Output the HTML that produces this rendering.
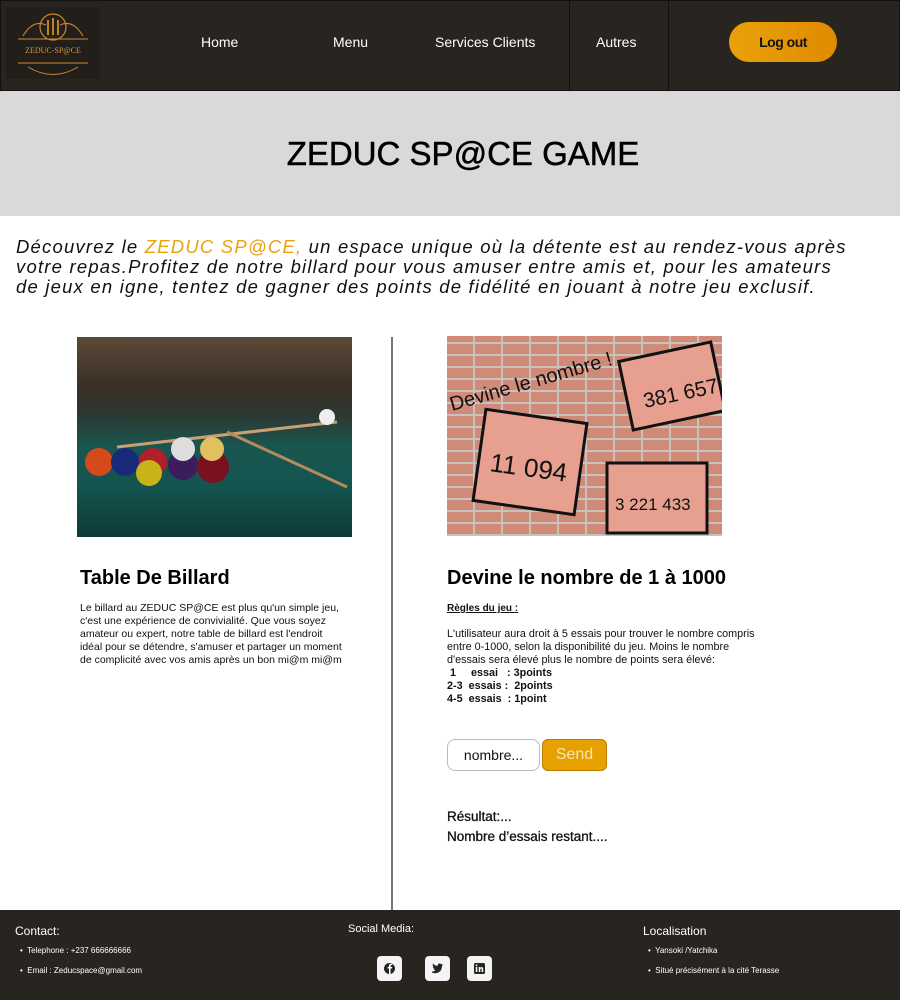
<!DOCTYPE html>
<html><head><meta charset="utf-8"><style>
*{margin:0;padding:0;box-sizing:border-box}
body{width:900px;height:1000px;position:relative;font-family:"Liberation Sans",sans-serif;background:#fff;overflow:hidden}
.abs{position:absolute}
nav{position:absolute;left:0;top:0;width:900px;height:91px;background:#28241f;border:1px solid #111}
nav a{position:absolute;top:33px;color:#fff;font-size:14px;text-decoration:none}
.hero{position:absolute;top:91px;left:0;width:900px;height:125px;background:#d9d9d9;text-align:center;padding-left:26px}
.hero h1{font-weight:normal;font-size:33px;line-height:125px;color:#000;-webkit-text-stroke:0.5px #000}
.intro{position:absolute;left:16px;top:237px;width:880px;font-style:italic;font-size:18.5px;line-height:20px;letter-spacing:1.2px;color:#111;white-space:nowrap}
h2{position:absolute;font-size:20px;font-weight:bold;color:#000}
.small{position:absolute;font-size:10.5px;line-height:13px;color:#111}
footer{position:absolute;left:0;top:910px;width:900px;height:90px;background:#28241f;color:#fff}
footer .t{position:absolute;font-size:12px}
footer .li{position:absolute;font-size:8px}
.ic{position:absolute;top:956px;width:25px;height:25px;background:#f4f4f4;border-radius:4px}
</style></head><body>
<nav>
<div class="abs" style="left:5px;top:6px;width:94px;height:72px;background:#221f1b"></div>
<svg class="abs" style="left:7px;top:6px" width="90" height="72" viewBox="0 0 90 72">
<circle cx="45" cy="20" r="13" fill="none" stroke="#c98a2e" stroke-width="1.2"/>
<path d="M10 32 H80 M15 29 Q25 12 38 18 M75 29 Q65 12 52 18 M20 60 Q45 75 70 60 M10 56 H80" stroke="#c98a2e" fill="none" stroke-width="1"/>
<path d="M40 13 V28 M45 11 V28 M50 13 V28" stroke="#e89a28" stroke-width="1.6"/>
<text x="45" y="46" fill="#d69a3e" font-size="8" text-anchor="middle" font-family="Liberation Serif">ZEDUC-SP@CE</text>
</svg>
<a style="left:200px">Home</a>
<a style="left:332px">Menu</a>
<a style="left:434px">Services Clients</a>
<div class="abs" style="left:568px;top:0;width:1px;height:90px;background:#111"></div>
<div class="abs" style="left:667px;top:0;width:1px;height:90px;background:#111"></div>
<a style="left:595px">Autres</a>
<div class="abs" style="left:728px;top:21px;width:108px;height:40px;border-radius:20px;background:linear-gradient(90deg,#e9a20a,#e08a00);color:#111;font-weight:bold;font-size:14px;text-align:center;line-height:40px;letter-spacing:-0.5px">Log out</div>
</nav>
<div class="hero"><h1>ZEDUC SP@CE GAME</h1></div>
<div class="intro">Découvrez le <span style="color:#e9a20a">ZEDUC SP@CE,</span> un espace unique où la détente est au rendez-vous après<br>votre repas.Profitez de notre billard pour vous amuser entre amis et, pour les amateurs<br>de jeux en igne, tentez de gagner des points de fidélité en jouant à notre jeu exclusif.</div>

<div class="abs" style="left:77px;top:337px;width:275px;height:200px;background:linear-gradient(180deg,#5a4a38 0%,#3a2f25 25%,#2a3a33 40%,#1a5650 55%,#14544f 75%,#0e3a37 100%)"></div>
<svg class="abs" style="left:77px;top:337px" width="275" height="200">
<line x1="40" y1="110" x2="260" y2="85" stroke="#c9a070" stroke-width="3"/>
<line x1="150" y1="95" x2="270" y2="150" stroke="#b98a5a" stroke-width="3"/>
<circle cx="250" cy="80" r="8" fill="#eee"/>
<circle cx="22" cy="125" r="14" fill="#d44a1a"/><circle cx="48" cy="125" r="14" fill="#1a2a7a"/>
<circle cx="76" cy="125" r="14" fill="#b01f2a"/><circle cx="106" cy="128" r="15" fill="#3a1d5a"/>
<circle cx="136" cy="130" r="16" fill="#7a1020"/><circle cx="72" cy="136" r="13" fill="#c9b21a"/>
<circle cx="106" cy="112" r="12" fill="#ddd"/><circle cx="135" cy="112" r="12" fill="#e0c060"/>
</svg>
<div class="abs" style="left:391px;top:337px;width:2px;height:573px;background:#777"></div>

<div class="abs" style="left:447px;top:336px;width:275px;height:200px;background-color:#dca090;background-image:repeating-linear-gradient(0deg,#c9c2bd 0 2px,transparent 2px 12px),repeating-linear-gradient(90deg,#cf8a78 0 26px,#c9c2bd 26px 28px)"></div>
<svg class="abs" style="left:447px;top:336px" width="275" height="200">
<rect x="178" y="15" width="94" height="70" fill="#e7a090" stroke="#111" stroke-width="3" transform="rotate(-12 225 50)"/>
<rect x="32" y="80" width="102" height="92" fill="#e7a090" stroke="#111" stroke-width="3" transform="rotate(8 83 126)"/>
<rect x="160" y="127" width="100" height="70" fill="#e7a090" stroke="#111" stroke-width="3"/>
<text x="5" y="75" font-size="20" fill="#111" font-family="Liberation Sans" transform="rotate(-16 5 75)">Devine le nombre !</text>
<text x="198" y="72" font-size="21" fill="#111" transform="rotate(-12 198 72)">381 657</text>
<text x="42" y="135" font-size="26" fill="#111" transform="rotate(8 42 135)">11 094</text>
<text x="168" y="174" font-size="17" fill="#111">3 221 433</text>
</svg>

<h2 style="left:80px;top:567px">Table De Billard</h2>
<div class="small" style="left:80px;top:602px;width:265px">Le billard au ZEDUC SP@CE est plus qu'un simple jeu, c'est une expérience de convivialité. Que vous soyez amateur ou expert, notre table de billard est l'endroit idéal pour se détendre, s'amuser et partager un moment de complicité avec vos amis après un bon mi@m mi@m</div>

<h2 style="left:447px;top:567px">Devine le nombre de 1 à 1000</h2>
<div class="small" style="left:447px;top:602px;font-weight:bold;font-size:10px;text-decoration:underline">Règles du jeu :</div>
<div class="small" style="left:447px;top:628px;width:380px;font-size:10.8px">L'utilisateur aura droit à 5 essais pour trouver le nombre compris<br>entre 0-1000, selon la disponibilité du jeu. Moins le nombre<br>d'essais sera élevé plus le nombre de points sera élevé:<br><b>&nbsp;1&nbsp;&nbsp;&nbsp;&nbsp; essai&nbsp;&nbsp; : 3points<br>2-3&nbsp; essais :&nbsp; 2points<br>4-5&nbsp; essais&nbsp; : 1point</b></div>

<div class="abs" style="left:447px;top:739px;width:93px;height:32px;border:1px solid #bbb;border-radius:8px;font-size:14px;line-height:30px;text-align:center;color:#111">nombre...</div>
<div class="abs" style="left:542px;top:739px;width:65px;height:32px;background:#e6a000;border:1px solid #c07a00;border-radius:6px;font-size:16px;line-height:30px;text-align:center;color:#fbe6b0">Send</div>
<div class="abs" style="left:447px;top:807px;font-size:13.5px;line-height:20px;color:#111;-webkit-text-stroke:0.3px #111">Résultat:...<br>Nombre d’essais restant....</div>

<footer>
<div class="t" style="left:15px;top:14px">Contact:</div>
<div class="li" style="left:20px;top:36px">•&nbsp; Telephone : +237 666666666</div>
<div class="li" style="left:20px;top:56px">•&nbsp; Email : Zeducspace@gmail.com</div>
<div class="t" style="left:348px;top:13px;font-size:11px">Social Media:</div>
<div class="t" style="left:643px;top:14px">Localisation</div>
<div class="li" style="left:648px;top:36px">•&nbsp; Yansoki /Yatchika</div>
<div class="li" style="left:648px;top:56px">•&nbsp; Situé précisément à la cité Terasse</div>
</footer>
<div class="ic" style="left:377px"><svg width="25" height="25"><circle cx="12.5" cy="12.5" r="5.5" fill="#28241f"/><path d="M13.5 18V12.5h1.5l.3-1.6h-1.8v-1c0-.5.2-.8.8-.8h1V7.7h-1.3c-1.4 0-2 .8-2 2v1.2h-1.3v1.6h1.3V18z" fill="#fff"/></svg></div>
<div class="ic" style="left:425px"><svg width="25" height="25"><path d="M7 16.5c4 2 10 0 10-6.5l1.2-1.3-1.5.3 1-1.3-1.6.5c-1.3-1.4-3.8-.4-3.4 1.7-2.1 0-3.6-1-4.7-2.3-.7 1.3 0 2.6.8 3.1l-1.1-.2c.1 1.2.9 1.9 1.9 2.1l-1.1.1c.4 1 1.2 1.5 2.2 1.6-1.1.9-2.4 1.3-3.7 1.2z" fill="#28241f"/></svg></div>
<div class="ic" style="left:467px"><svg width="25" height="25"><rect x="7" y="7" width="11" height="11" rx="1.5" fill="#28241f"/><rect x="8.8" y="11" width="1.5" height="5" fill="#fff"/><circle cx="9.5" cy="9.3" r=".9" fill="#fff"/><path d="M11.8 11h1.4v.8c.5-1 3-1.2 3 .9V16h-1.5v-2.8c0-1-1.4-1-1.4 0V16h-1.5z" fill="#fff"/></svg></div>
</body></html>
